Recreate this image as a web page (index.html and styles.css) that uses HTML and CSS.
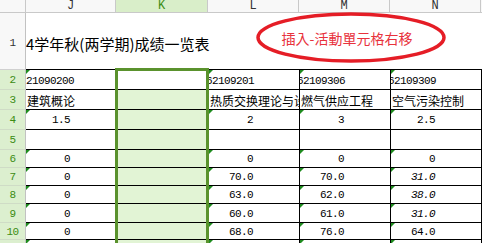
FILE: index.html
```html
<!DOCTYPE html>
<html>
<head>
<meta charset="utf-8">
<link rel="stylesheet" href="styles.css">
</head>
<body>
<div class="wrap">
  <div class="sheet">
    <div class="ch corner"></div>
    <div class="ch">J</div>
    <div class="ch ch-sel">K</div>
    <div class="ch">L</div>
    <div class="ch">M</div>
    <div class="ch">N</div>
    <div class="ch"></div>

    <div class="rh rh-plain">1</div>
    <div class="title-cell"><span class="title">4学年秋(两学期)成绩一览表</span></div>

    <div class="rh">2</div>
    <div class="c code t"><span class="clip1">21090200</span></div>
    <div class="c k active"></div>
    <div class="c code t v"><span class="clip">62109201</span></div>
    <div class="c code t v"><span class="clip">62109306</span></div>
    <div class="c code t v"><span class="clip">62109309</span></div>
    <div class="c o t"></div>

    <div class="rh">3</div>
    <div class="c cn">建筑概论</div>
    <div class="c k"></div>
    <div class="c cn v">热质交换理论与设计</div>
    <div class="c cn v">燃气供应工程</div>
    <div class="c cn v">空气污染控制</div>
    <div class="c o"></div>

    <div class="rh">4</div>
    <div class="c num t">1.5</div>
    <div class="c k"></div>
    <div class="c num t v">2</div>
    <div class="c num t v">3</div>
    <div class="c num t v">2.5</div>
    <div class="c o t"></div>

    <div class="rh">5</div>
    <div class="c"></div>
    <div class="c k"></div>
    <div class="c v"></div>
    <div class="c v"></div>
    <div class="c v"></div>
    <div class="c o"></div>

    <div class="rh">6</div>
    <div class="c num t">0</div>
    <div class="c k"></div>
    <div class="c num t v">0</div>
    <div class="c num t v">0</div>
    <div class="c num t v">0</div>
    <div class="c o t"></div>

    <div class="rh">7</div>
    <div class="c num t">0</div>
    <div class="c k"></div>
    <div class="c num t v">70.0</div>
    <div class="c num t v">70.0</div>
    <div class="c num t v it">31.0</div>
    <div class="c o t"></div>

    <div class="rh">8</div>
    <div class="c num t">0</div>
    <div class="c k"></div>
    <div class="c num t v">63.0</div>
    <div class="c num t v">62.0</div>
    <div class="c num t v it">38.0</div>
    <div class="c o t"></div>

    <div class="rh">9</div>
    <div class="c num t">0</div>
    <div class="c k"></div>
    <div class="c num t v">60.0</div>
    <div class="c num t v">61.0</div>
    <div class="c num t v it">31.0</div>
    <div class="c o t"></div>

    <div class="rh">10</div>
    <div class="c num t">0</div>
    <div class="c k"></div>
    <div class="c num t v">68.0</div>
    <div class="c num t v">76.0</div>
    <div class="c num t v">64.0</div>
    <div class="c o t"></div>

    <div class="rh"></div>
    <div class="c t"></div>
    <div class="c k"></div>
    <div class="c t v"></div>
    <div class="c t v"></div>
    <div class="c t v"></div>
    <div class="c o"></div>
  </div>

  <div class="selection"></div>

  <div class="note">
    <svg class="ring" width="194" height="54" viewBox="0 0 194 54">
      <ellipse cx="96" cy="25.5" rx="93" ry="23.5" fill="none" stroke="#e51d26" stroke-width="3.5"/>
    </svg>
    <span class="note-text">插入-活動單元格右移</span>
  </div>
</div>
</body>
</html>
```
FILE: styles.css
```css
html, body {
  margin: 0;
  padding: 0;
  background: #fff;
  overflow: hidden;
}

.wrap {
  position: relative;
  width: 482px;
  height: 243px;
  overflow: hidden;
}

.sheet {
  display: grid;
  grid-template-columns: 26px 90px 92px 91px 91px 91px 10px;
  grid-template-rows: 13px 57px 20px 20px 20px 20px 18px 18px 18px 19px 17px 10px;
  font-family: "Liberation Mono", monospace;
  color: #000;
}

.ch {
  box-sizing: border-box;
  background: #f8f8f8;
  border-right: 1px solid #c9c9c9;
  border-bottom: 1px solid #c9c9c9;
  font-family: "Liberation Mono", monospace;
  font-size: 12px;
  line-height: 12px;
  text-align: center;
  color: #333;
}

.ch-sel {
  background: #d9eec9;
  color: #3b8c12;
  border-right-color: #c9c9c9;
}

.rh {
  box-sizing: border-box;
  background: #dcefcf;
  border-right: 1px solid #c2c2c2;
  border-bottom: 1px solid #cfdcc6;
  color: #3b8c12;
  font-family: "Liberation Mono", monospace;
  font-size: 11px;
  letter-spacing: -0.6px;
  display: flex;
  align-items: center;
  justify-content: center;
  padding-top: 1px;
}

.rh-plain {
  background: #f8f8f8;
  color: #333;
  border-bottom-color: #d0d0d0;
  padding-top: 4px;
}

.title-cell {
  grid-column: 2 / -1;
  box-sizing: border-box;
  border-bottom: 1px solid #000;
  display: flex;
  align-items: center;
  padding-top: 6px;
  overflow: hidden;
  white-space: nowrap;
}

.title {
  font-family: "Noto Sans CJK SC", sans-serif;
  font-size: 15px;
  line-height: 18px;
  color: #000;
}

.c {
  position: relative;
  box-sizing: border-box;
  border-bottom: 1px solid #000;
  overflow: hidden;
  white-space: nowrap;
  display: flex;
  align-items: center;
  font-size: 11px;
  letter-spacing: -0.6px;
}

.v {
  border-left: 1px solid #000;
}

.k {
  background: #e2f4d5;
}

.active {
  background: #fff;
}

.o {
  border-left: 1px solid #000;
}

.code {
  padding-top: 2px;
}

.clip {
  margin-left: -3px;
}

.clip1 {
  margin-left: 0;
}

.cn {
  font-family: "Noto Sans CJK SC", sans-serif;
  font-size: 12px;
  letter-spacing: 0;
  padding-left: 1px;
  padding-top: 2px;
}

.num {
  justify-content: flex-end;
  padding-right: 46px;
  padding-top: 1px;
}

.it {
  font-style: italic;
}

.t::before {
  content: "";
  position: absolute;
  top: 0;
  left: 0;
  border-top: 4px solid #1e8c1e;
  border-right: 4px solid transparent;
}

.selection {
  position: absolute;
  left: 115px;
  top: 68px;
  width: 94px;
  height: 200px;
  box-sizing: border-box;
  border: 3px solid #5a922d;
}

.note {
  position: absolute;
  left: 255px;
  top: 12px;
  width: 194px;
  height: 54px;
  display: flex;
  align-items: center;
  justify-content: center;
}

.ring {
  position: absolute;
  left: 0;
  top: 0;
}

.note-text {
  position: relative;
  font-family: "Noto Sans CJK TC", "Noto Sans CJK SC", sans-serif;
  font-size: 14px;
  color: #e8323c;
  margin-right: 10px;
  margin-top: -3px;
}
```
